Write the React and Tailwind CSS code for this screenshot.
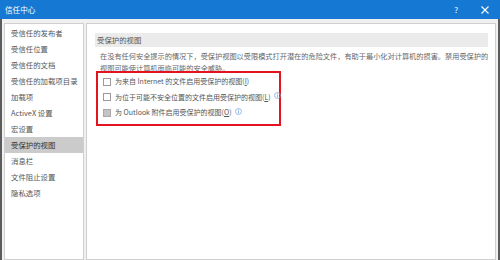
import React from 'react';

const navItems = [
  '受信任的发布者',
  '受信任位置',
  '受信任的文档',
  '受信任的加载项目录',
  '加载项',
  'ActiveX 设置',
  '宏设置',
  '受保护的视图',
  '消息栏',
  '文件阻止设置',
  '隐私选项',
];

function InfoIcon() {
  return (
    <svg width="7" height="7" viewBox="0 0 10 10" className="ml-[3px] -mt-[3px] shrink-0">
      <circle cx="5" cy="5" r="4.2" fill="none" stroke="#7aa6dc" strokeWidth="1.1" />
      <rect x="4.4" y="4.2" width="1.2" height="3.4" fill="#7aa6dc" />
      <rect x="4.4" y="2.3" width="1.2" height="1.2" fill="#7aa6dc" />
    </svg>
  );
}

function CheckRow({ label, keyChar, disabled, info }) {
  return (
    <div className="flex items-center h-[15.5px] whitespace-nowrap">
      <span
        className={`w-[8px] h-[8px] border shrink-0 ${
          disabled ? 'bg-[#c4c4c4] border-[#a8a8a8]' : 'bg-white border-[#9a9a9a]'
        }`}
      />
      <span className="ml-[4px] text-[#555] text-[7px]">
        {label}(<span className="underline">{keyChar}</span>)
      </span>
      {info && <InfoIcon />}
    </div>
  );
}

export default function App() {
  return (
    <div
      className="w-[500px] h-[260px] flex flex-col overflow-hidden bg-[#f0f0f0] text-[7.4px] leading-none"
      style={{ fontFamily: '"Noto Sans CJK SC", "Noto Sans", sans-serif' }}
    >
      {/* title bar */}
      <div className="h-[19px] bg-[#1578d2] flex items-center text-white shrink-0">
        <span className="ml-[5px] text-[7.6px]">信任中心</span>
        <span className="ml-auto mr-[23px] text-[8px]">?</span>
        <svg width="8" height="8" viewBox="0 0 8 8" className="mr-[11px]">
          <path d="M0.5 0.5 L7.5 7.5 M7.5 0.5 L0.5 7.5" stroke="white" strokeWidth="1.1" />
        </svg>
      </div>

      {/* body */}
      <div className="flex-1 flex border-l-2 border-r-2 border-[#5c5c5c] px-[2px] pt-[4px] gap-[2px] min-h-0">
        {/* sidebar */}
        <div className="w-[80px] bg-white border border-[#cfcfcf] pt-[1px]">
          {navItems.map((item) => (
            <div
              key={item}
              className={`h-[16px] flex items-center pl-[6px] whitespace-nowrap ${
                item === '受保护的视图' ? 'bg-[#cbcbcb] text-[#333]' : 'text-[#555]'
              }`}
            >
              {item}
            </div>
          ))}
        </div>

        {/* content */}
        <div className="flex-1 bg-white border border-[#cfcfcf] pt-[9px] pl-[8px] pr-[4px]">
          <div className="h-[14px] mr-[3px] bg-[#ebebeb] flex items-center pl-[2px] text-[#555]">
            受保护的视图
          </div>
          <p className="mt-[4px] pl-[5px] text-[#666] text-[7.2px] leading-[11.5px]">
            在没有任何安全提示的情况下，受保护视图以受限模式打开潜在的危险文件，有助于最小化对计算机的损害。禁用受保护的视图可能使计算机面临可能的安全威胁。
          </p>
          <div className="w-[185px] mt-[-3px] ml-[1px] border-2 border-[#e3141f] pl-[5px] pt-[1px] pb-[3px] relative">
            <CheckRow label="为来自 Internet 的文件启用受保护的视图" keyChar="I" />
            <CheckRow label="为位于可能不安全位置的文件启用受保护的视图" keyChar="L" info />
            <CheckRow label="为 Outlook 附件启用受保护的视图" keyChar="O" disabled info />
          </div>
        </div>
      </div>
    </div>
  );
}
